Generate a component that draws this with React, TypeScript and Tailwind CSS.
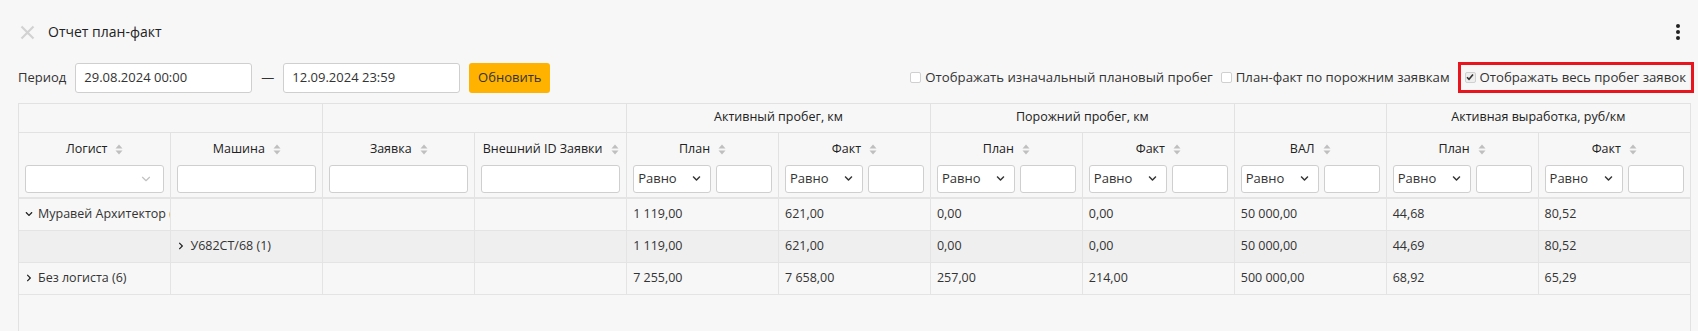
import { FaChevronDown, FaChevronRight } from "react-icons/fa";
import { FiChevronDown } from "react-icons/fi";

const SortIcon = () => (
  <svg width="8" height="11" viewBox="0 0 8 11" className="ml-[8px] inline-block shrink-0">
    <path d="M4 0.5L7.5 4.5H0.5z" fill="#bfbfbf" />
    <path d="M4 10.5L0.5 6.5h7z" fill="#bfbfbf" />
  </svg>
);

type Col = { label: string; filter: "select" | "text" | "num" };

const columns: Col[] = [
  { label: "Логист", filter: "select" },
  { label: "Машина", filter: "text" },
  { label: "Заявка", filter: "text" },
  { label: "Внешний ID Заявки", filter: "text" },
  { label: "План", filter: "num" },
  { label: "Факт", filter: "num" },
  { label: "План", filter: "num" },
  { label: "Факт", filter: "num" },
  { label: "ВАЛ", filter: "num" },
  { label: "План", filter: "num" },
  { label: "Факт", filter: "num" },
];

const groups = [
  { label: "", span: 2 },
  { label: "", span: 2 },
  { label: "Активный пробег, км", span: 2 },
  { label: "Порожний пробег, км", span: 2 },
  { label: "", span: 1 },
  { label: "Активная выработка, руб/км", span: 2 },
];

type Row = {
  name: string;
  nameCol: number;
  open: boolean;
  child?: boolean;
  values: string[];
};

const rows: Row[] = [
  {
    name: "Муравей Архитектор (1)",
    nameCol: 0,
    open: true,
    values: ["1 119,00", "621,00", "0,00", "0,00", "50 000,00", "44,68", "80,52"],
  },
  {
    name: "У682СТ/68 (1)",
    nameCol: 1,
    open: false,
    child: true,
    values: ["1 119,00", "621,00", "0,00", "0,00", "50 000,00", "44,69", "80,52"],
  },
  {
    name: "Без логиста (6)",
    nameCol: 0,
    open: false,
    values: ["7 255,00", "7 658,00", "257,00", "214,00", "500 000,00", "68,92", "65,29"],
  },
];

const Filter = ({ kind }: { kind: Col["filter"] }) => {
  if (kind === "select") {
    return (
      <div className="flex h-[28px] items-center justify-end rounded-[3px] border border-[#cfcfcf] bg-white pr-[10px]">
        <FiChevronDown size={14} className="text-[#c2c2c2]" />
      </div>
    );
  }
  if (kind === "text") {
    return <div className="h-[28px] rounded-[3px] border border-[#cfcfcf] bg-white" />;
  }
  return (
    <div className="flex gap-[5px]">
      <div className="flex h-[28px] w-[78px] shrink-0 items-center justify-between rounded-[3px] border border-[#cfcfcf] bg-white pl-[4px] pr-[9px] text-[13px] text-[#333]">
        <span>Равно</span>
        <FaChevronDown size={9} className="text-[#333]" />
      </div>
      <div className="h-[28px] flex-1 rounded-[3px] border border-[#cfcfcf] bg-white" />
    </div>
  );
};

const Checkbox = ({ checked, label }: { checked?: boolean; label: string }) => (
  <label className="flex items-center gap-[4px] whitespace-nowrap">
    <span
      className={`flex h-[11px] w-[11px] items-center justify-center rounded-[2px] border border-[#d0d0d0] ${
        checked ? "bg-[#eeeeee]" : "bg-white"
      }`}
    >
      {checked && (
        <svg width="8" height="8" viewBox="0 0 8 8">
          <path d="M1 4.2L3 6.2L7 1.5" stroke="#333" strokeWidth="1.6" fill="none" />
        </svg>
      )}
    </span>
    <span>{label}</span>
  </label>
);

export default function App() {
  return (
    <div className="flex h-[331px] w-full flex-col overflow-hidden bg-[#f7f7f7] font-['Open_Sans',sans-serif] text-[#333]">
      <div className="flex items-center justify-between pl-[20px] pr-[18px] pt-[24px]">
        <div className="flex items-center gap-[13px]">
          <svg width="15" height="15" viewBox="0 0 15 15">
            <path d="M1.5 1.5L13.5 13.5M13.5 1.5L1.5 13.5" stroke="#d2d2d2" strokeWidth="2.2" />
          </svg>
          <span className="text-[14px] leading-[16px] text-[#222]">Отчет план-факт</span>
        </div>
        <div className="flex flex-col items-center gap-[2px]">
          <span className="h-[4px] w-[4px] rounded-full bg-[#222]" />
          <span className="h-[4px] w-[4px] rounded-full bg-[#222]" />
          <span className="h-[4px] w-[4px] rounded-full bg-[#222]" />
        </div>
      </div>

      <div className="mt-[22px] flex items-center justify-between pl-[18px] pr-[4px]">
        <div className="flex items-center text-[13px]">
          <span className="mr-[9px]">Период</span>
          <div className="flex h-[30px] w-[177px] items-center rounded-[3px] border border-[#cfcfcf] bg-white px-[8px] text-[#333]">
            29.08.2024 00:00
          </div>
          <span className="mx-[9px]">—</span>
          <div className="flex h-[30px] w-[177px] items-center rounded-[3px] border border-[#cfcfcf] bg-white px-[8px] text-[#333]">
            12.09.2024 23:59
          </div>
          <button className="ml-[9px] h-[30px] w-[81px] rounded-[3px] bg-[#ffb300] text-[13px] text-[#333]">
            Обновить
          </button>
        </div>
        <div className="flex items-center gap-[8px] text-[13.2px]">
          <Checkbox label="Отображать изначальный плановый пробег" />
          <Checkbox label="План-факт по порожним заявкам" />
          <div className="flex h-[31px] items-center border-[3px] border-[#e8141e] pl-[4px] pr-[5px]">
            <Checkbox checked label="Отображать весь пробег заявок" />
          </div>
        </div>
      </div>

      <div className="ml-[18px] mr-[7px] mt-[10px] flex-1 border-x border-t border-[#e2e2e2]">
        <table className="w-full table-fixed border-collapse text-[12.5px]">
          <thead>
            <tr className="h-[28px]">
              {groups.map((g, i) => (
                <th
                  key={i}
                  colSpan={g.span}
                  className="border-b border-r border-[#e2e2e2] text-center text-[12.5px] font-normal text-[#222] last:border-r-0"
                >
                  {g.label}
                </th>
              ))}
            </tr>
            <tr className="h-[66px]">
              {columns.map((c, i) => (
                <th
                  key={i}
                  className="border-b-2 border-r border-[#e2e2e2] border-b-[#e4e4e4] px-[6px] pb-[4px] pt-[7px] align-top font-normal last:border-r-0"
                >
                  <div className="flex h-[20px] items-center justify-center text-[12.5px] text-[#222]">
                    <span className="whitespace-nowrap">{c.label}</span>
                    <SortIcon />
                  </div>
                  <div className="mt-[5px]">
                    <Filter kind={c.filter} />
                  </div>
                </th>
              ))}
            </tr>
          </thead>
          <tbody>
            {rows.map((r, ri) => (
              <tr key={ri} className={`h-[32px] ${r.child ? "bg-[#efefef]" : ""}`}>
                {columns.map((_, ci) => {
                  let content: React.ReactNode = null;
                  if (ci === r.nameCol) {
                    content = (
                      <span className="flex items-center gap-[5px]">
                        {r.open ? (
                          <FaChevronDown size={8} className="shrink-0 text-[#222]" />
                        ) : (
                          <FaChevronRight size={8} className="shrink-0 text-[#222]" />
                        )}
                        <span>{r.name}</span>
                      </span>
                    );
                  } else if (ci >= 4) {
                    content = r.values[ci - 4];
                  }
                  return (
                    <td
                      key={ci}
                      className="overflow-hidden whitespace-nowrap border-b border-r border-[#e4e4e4] px-[6px] text-left text-[#333] last:border-r-0"
                    >
                      {content}
                    </td>
                  );
                })}
              </tr>
            ))}
          </tbody>
        </table>
      </div>
    </div>
  );
}
